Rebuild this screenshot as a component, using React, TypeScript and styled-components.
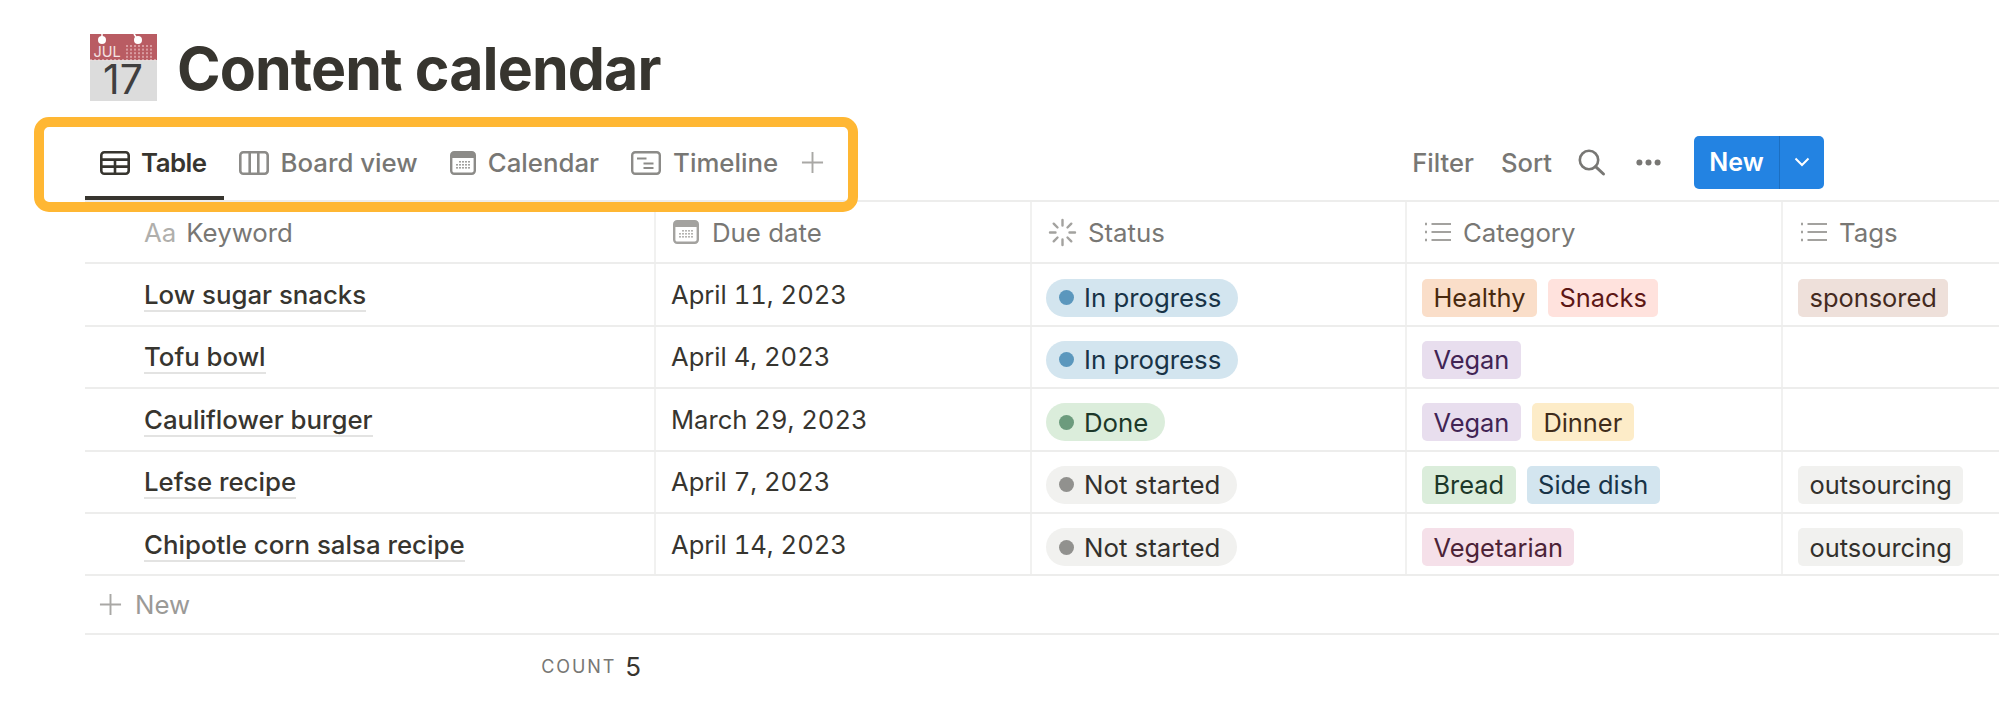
import React from 'react'
import styled, { createGlobalStyle } from 'styled-components'

const GlobalStyle = createGlobalStyle`
  html, body {
    margin: 0;
    padding: 0;
    background: #fff;
    overflow: hidden;
  }
  body {
    font-family: Inter, "Liberation Sans", sans-serif;
    color: #37352f;
  }
  * { box-sizing: border-box; }
`

const Page = styled.div`
  width: 1999px;
  height: 709px;
  padding: 34px 0 0 85px;
  overflow: hidden;
  position: relative;
`

const TitleRow = styled.div`
  display: flex;
  align-items: center;
  gap: 20px;
  height: 67px;
  padding-left: 5px;
`

const Title = styled.h1`
  margin: 0;
  font-size: 59px;
  font-weight: 700;
  line-height: 67px;
  letter-spacing: -0.9px;
  color: #37352f;
  position: relative;
  top: 1px;
`

const Toolbar = styled.div`
  position: relative;
  display: flex;
  justify-content: space-between;
  align-items: flex-end;
  height: 99px;
  padding-right: 175px;
`

const Tabs = styled.div`
  display: flex;
  align-items: flex-end;
`

const Tab = styled.div<{ $active?: boolean }>`
  display: flex;
  align-items: center;
  gap: ${({ $active }) => ($active ? 11 : 12)}px;
  height: 59px;
  padding: 0 17px 12px 15px;
  font-size: 25.8px;
  font-weight: ${({ $active }) => ($active ? 600 : 500)};
  letter-spacing: ${({ $active }) => ($active ? '-0.5px' : '0')};
  color: ${({ $active }) => ($active ? '#37352f' : '#787774')};
  border-bottom: 4px solid ${({ $active }) => ($active ? '#37352f' : 'transparent')};
`

const AddTab = styled.div`
  display: flex;
  align-items: center;
  height: 59px;
  padding: 0 0 16px 6px;
`

const Highlight = styled.div`
  position: absolute;
  left: -51px;
  top: 16px;
  width: 824px;
  height: 95px;
  border: 10px solid #ffb733;
  border-radius: 15px;
  pointer-events: none;
  z-index: 2;
`

const Actions = styled.div`
  display: flex;
  align-items: center;
  height: 65px;
  padding-bottom: 11px;
`

const ActionText = styled.span<{ $gap: number }>`
  font-size: 25.6px;
  font-weight: 500;
  color: #787774;
  margin-right: ${({ $gap }) => $gap}px;
`

const IconSlot = styled.span<{ $gap: number }>`
  display: flex;
  align-items: center;
  margin-right: ${({ $gap }) => $gap}px;
`

const NewButton = styled.div`
  display: flex;
  align-items: stretch;
  width: 130px;
  height: 53px;
  border-radius: 5px;
  background: #2383e2;
  color: #fff;
  font-size: 25px;
  font-weight: 600;
`

const NewLabel = styled.div`
  display: flex;
  align-items: center;
  justify-content: center;
  width: 86px;
  border-right: 1px solid #1b6fc2;
`

const NewArrow = styled.div`
  flex: 1;
  display: flex;
  align-items: center;
  justify-content: center;
`

const Table = styled.div`
  border-top: 2px solid #ededec;
`

const Row = styled.div<{ $header?: boolean }>`
  display: grid;
  grid-template-columns: 571px 376px 375px 376px 1fr;
  height: 62.4px;
  border-bottom: 2px solid #ededec;
  color: ${({ $header }) => ($header ? '#787774' : '#37352f')};
`

const Cell = styled.div<{ $pad?: number }>`
  display: flex;
  align-items: center;
  gap: 11px;
  padding-left: ${({ $pad }) => $pad ?? 15}px;
  border-right: 2px solid #f1f1f0;
  font-size: 25.8px;
  font-weight: 400;
  white-space: nowrap;
  &:last-child { border-right: 0; }
`

const PillCell = styled(Cell)`
  padding-top: 6px;
  font-size: 25.4px;
`

const DateText = styled.span`
  font-feature-settings: "tnum";
  font-size: 25.6px;
`

const HeaderLabel = styled.div<{ $gap?: number }>`
  display: flex;
  align-items: center;
  gap: ${({ $gap }) => $gap ?? 11}px;
  font-weight: 400;
`

const TypeMark = styled.span`
  color: #b0afac;
  font-size: 25.8px;
  font-weight: 400;
`

const NameLink = styled.span`
  margin-top: 2px;
  font-weight: 500;
  color: #37352f;
  line-height: 31px;
  border-bottom: 2px solid #e3e3e2;
`

const StatusPill = styled.span<{ $bg: string; $fg: string }>`
  display: inline-flex;
  align-items: center;
  gap: 10px;
  height: 38px;
  padding: 0 17px 0 13px;
  border-radius: 19px;
  font-size: 25.8px;
  background: ${({ $bg }) => $bg};
  color: ${({ $fg }) => $fg};
`

const Dot = styled.span<{ $color: string }>`
  width: 15px;
  height: 15px;
  border-radius: 50%;
  background: ${({ $color }) => $color};
`

const Tag = styled.span<{ $bg: string; $fg: string }>`
  display: inline-flex;
  align-items: center;
  height: 38px;
  padding: 0 11.5px;
  border-radius: 5px;
  background: ${({ $bg }) => $bg};
  color: ${({ $fg }) => $fg};
`

const AddRow = styled.div`
  display: flex;
  align-items: center;
  gap: 13px;
  height: 59px;
  padding-left: 14px;
  border-bottom: 2px solid #ededec;
  font-size: 25.8px;
  color: #9b9a97;
`

const Footer = styled.div`
  display: flex;
  align-items: center;
  justify-content: flex-end;
  gap: 9px;
  width: 556px;
  height: 62px;
`

const CountLabel = styled.span`
  font-size: 18px;
  letter-spacing: 1.9px;
  color: #787774;
`

const CountValue = styled.span`
  font-size: 26px;
  color: #37352f;
`

const IconSvg = styled.svg`
  display: block;
  flex: none;
  overflow: visible;
`

const CalendarEmoji = () => (
  <IconSvg width="67" height="67" viewBox="0 0 67 67">
    <rect x="0" y="26" width="67" height="41" fill="#dcdcdc" />
    <rect x="0" y="0" width="67" height="26" fill="#b95c63" />
    <path d="M0 26H67" stroke="#f3dfe0" strokeWidth="1" strokeDasharray="2 2" />
    <circle cx="12" cy="6" r="4" fill="#fff" />
    <circle cx="48" cy="6" r="4" fill="#fff" />
    <path d="M12 0v3M44 0l2 3" stroke="#fff" strokeWidth="1.5" />
    <text x="3.5" y="23" fontFamily="Inter, sans-serif" fontSize="14.5" fill="#f5e3e4">JUL</text>
    <g fill="#d99ca1">
      {[0, 1, 2, 3].flatMap(r =>
        [0, 1, 2, 3, 4, 5, 6].map(c => (
          <rect key={`${r}-${c}`} x={36 + c * 4} y={11 + r * 3.6} width="2" height="2" />
        ))
      )}
    </g>
    <text x="33" y="60" textAnchor="middle" fontFamily="Inter, sans-serif" fontSize="41" fill="#3f3f3f">17</text>
  </IconSvg>
)

const TableIcon = () => (
  <IconSvg width="30" height="24" viewBox="0 0 30 24" fill="none" stroke="#37352f" strokeWidth="2.6">
    <rect x="1.3" y="1.3" width="27.4" height="21.4" rx="3" />
    <path d="M1.3 8.6H28.7M1.3 15.6H28.7M15 8.6V22.7" />
  </IconSvg>
)

const BoardIcon = () => (
  <IconSvg width="30" height="24" viewBox="0 0 30 24" fill="none" stroke="#8c8b88" strokeWidth="2.6">
    <rect x="1.3" y="1.3" width="27.4" height="21.4" rx="3" />
    <path d="M10.7 1.3V22.7M19.3 1.3V22.7" />
  </IconSvg>
)

const CalendarIcon = ({ color = '#8c8b88' }: { color?: string }) => (
  <IconSvg width="26" height="24" viewBox="0 0 26 24" fill="none">
    <rect x="1.2" y="1.2" width="23.6" height="21.6" rx="3" stroke={color} strokeWidth="2.4" />
    <path d="M1 4a3 3 0 0 1 3-3h18a3 3 0 0 1 3 3v3H1z" fill={color} />
    <g fill={color}>
      {[0, 1, 2].flatMap(r =>
        [0, 1, 2, 3, 4].map(c =>
          r === 0 && c === 0 ? null : <rect key={`${r}-${c}`} x={6.2 + c * 3} y={10 + r * 3} width="1.6" height="1.6" />
        )
      )}
    </g>
  </IconSvg>
)

const TimelineIcon = () => (
  <IconSvg width="30" height="24" viewBox="0 0 30 24" fill="none" stroke="#8c8b88" strokeWidth="2.4">
    <rect x="1.2" y="1.2" width="27.6" height="21.6" rx="3" />
    <path d="M6 7.5H15.5M12.5 12.5H22.5M12.5 17H22.5" strokeWidth="2" />
  </IconSvg>
)

const PlusIcon = ({ size, color }: { size: number; color: string }) => (
  <IconSvg width={size} height={size} viewBox="0 0 24 24" fill="none" stroke={color} strokeWidth="2">
    <path d="M12 1V23M1 12H23" />
  </IconSvg>
)

const SearchIcon = () => (
  <IconSvg width="27" height="26" viewBox="0 0 27 26" fill="none" stroke="#787774" strokeWidth="2.6">
    <circle cx="11" cy="11" r="9.2" />
    <path d="M17.6 17.6L25.5 25" strokeLinecap="round" strokeWidth="3" />
  </IconSvg>
)

const DotsIcon = () => (
  <IconSvg width="25" height="7" viewBox="0 0 25 7" fill="#787774">
    <circle cx="3.4" cy="3.5" r="3" />
    <circle cx="12.5" cy="3.5" r="3" />
    <circle cx="21.6" cy="3.5" r="3" />
  </IconSvg>
)

const ChevronIcon = () => (
  <IconSvg width="16" height="10" viewBox="0 0 16 10" fill="none" stroke="#fff" strokeWidth="2">
    <path d="M1.5 1.5L8 8L14.5 1.5" />
  </IconSvg>
)

const StatusIcon = () => (
  <IconSvg width="29" height="29" viewBox="0 0 29 29" fill="none" stroke="#a3a29f" strokeWidth="2.4" strokeLinecap="round">
    <path d="M14.5 2V7.5M14.5 21.5V27M2 14.5H7.5M21.5 14.5H27M5.7 5.7L9.5 9.5M19.5 19.5L23.3 23.3M5.7 23.3L9.5 19.5M19.5 9.5L23.3 5.7" />
  </IconSvg>
)

const ListIcon = () => (
  <IconSvg width="27" height="22" viewBox="0 0 27 22" fill="none" stroke="#a3a29f" strokeWidth="2">
    <path d="M7.5 3H27M7.5 11H27M7.5 19H27" />
    <path d="M1 3H3M1 11H3M1 19H3" strokeWidth="2.6" />
  </IconSvg>
)

const tagColors = {
  orange: { bg: '#fadec9', fg: '#49290e' },
  red: { bg: '#ffe2dd', fg: '#5d1715' },
  brown: { bg: '#eee0da', fg: '#442a1e' },
  purple: { bg: '#e8deee', fg: '#412454' },
  yellow: { bg: '#fdecc8', fg: '#402c1b' },
  green: { bg: '#dbeddb', fg: '#1c3829' },
  blue: { bg: '#d3e5ef', fg: '#183347' },
  pink: { bg: '#f5e0e9', fg: '#4c2337' },
  gray: { bg: '#f1f1ef', fg: '#32302c' },
}

type TagColor = keyof typeof tagColors

const statuses = {
  progress: { label: 'In progress', bg: '#d3e5ef', fg: '#183347', dot: '#5b97bd' },
  done: { label: 'Done', bg: '#dbeddb', fg: '#1c3829', dot: '#6c9b7d' },
  todo: { label: 'Not started', bg: '#f1f1ef', fg: '#32302c', dot: '#91918e' },
}

interface Item {
  name: string
  date: string
  status: keyof typeof statuses
  category: [string, TagColor][]
  tags: [string, TagColor][]
}

const items: Item[] = [
  { name: 'Low sugar snacks', date: 'April 11, 2023', status: 'progress', category: [['Healthy', 'orange'], ['Snacks', 'red']], tags: [['sponsored', 'brown']] },
  { name: 'Tofu bowl', date: 'April 4, 2023', status: 'progress', category: [['Vegan', 'purple']], tags: [] },
  { name: 'Cauliflower burger', date: 'March 29, 2023', status: 'done', category: [['Vegan', 'purple'], ['Dinner', 'yellow']], tags: [] },
  { name: 'Lefse recipe', date: 'April 7, 2023', status: 'todo', category: [['Bread', 'green'], ['Side dish', 'blue']], tags: [['outsourcing', 'gray']] },
  { name: 'Chipotle corn salsa recipe', date: 'April 14, 2023', status: 'todo', category: [['Vegetarian', 'pink']], tags: [['outsourcing', 'gray']] },
]

const renderTags = (list: [string, TagColor][]) =>
  list.map(([label, color]) => (
    <Tag key={label} $bg={tagColors[color].bg} $fg={tagColors[color].fg}>
      {label}
    </Tag>
  ))

export default function App() {
  return (
    <Page>
      <GlobalStyle />
      <TitleRow>
        <CalendarEmoji />
        <Title>Content calendar</Title>
      </TitleRow>

      <Toolbar>
        <Tabs>
          <Tab $active><TableIcon />Table</Tab>
          <Tab><BoardIcon />Board view</Tab>
          <Tab><CalendarIcon />Calendar</Tab>
          <Tab><TimelineIcon />Timeline</Tab>
          <AddTab><PlusIcon size={23} color="#a9a8a5" /></AddTab>
        </Tabs>
        <Actions>
          <ActionText $gap={27}>Filter</ActionText>
          <ActionText $gap={26}>Sort</ActionText>
          <IconSlot $gap={31}><SearchIcon /></IconSlot>
          <IconSlot $gap={33}><DotsIcon /></IconSlot>
          <NewButton>
            <NewLabel>New</NewLabel>
            <NewArrow><ChevronIcon /></NewArrow>
          </NewButton>
        </Actions>
        <Highlight />
      </Toolbar>

      <Table>
        <Row $header>
          <Cell $pad={59}><HeaderLabel $gap={10}><TypeMark>Aa</TypeMark>Keyword</HeaderLabel></Cell>
          <Cell $pad={17}><HeaderLabel $gap={13}><CalendarIcon color="#a3a29f" />Due date</HeaderLabel></Cell>
          <Cell $pad={16}><HeaderLabel><StatusIcon />Status</HeaderLabel></Cell>
          <Cell $pad={17}><HeaderLabel $gap={12}><ListIcon />Category</HeaderLabel></Cell>
          <Cell $pad={17}><HeaderLabel $gap={12}><ListIcon />Tags</HeaderLabel></Cell>
        </Row>
        {items.map(item => {
          const status = statuses[item.status]
          return (
            <Row key={item.name}>
              <Cell $pad={59}><NameLink>{item.name}</NameLink></Cell>
              <Cell><DateText>{item.date}</DateText></Cell>
              <PillCell $pad={14}>
                <StatusPill $bg={status.bg} $fg={status.fg}>
                  <Dot $color={status.dot} />
                  {status.label}
                </StatusPill>
              </PillCell>
              <PillCell>{renderTags(item.category)}</PillCell>
              <PillCell>{renderTags(item.tags)}</PillCell>
            </Row>
          )
        })}
        <AddRow><PlusIcon size={23} color="#a9a8a5" />New</AddRow>
      </Table>

      <Footer>
        <CountLabel>COUNT</CountLabel>
        <CountValue>5</CountValue>
      </Footer>
    </Page>
  )
}
